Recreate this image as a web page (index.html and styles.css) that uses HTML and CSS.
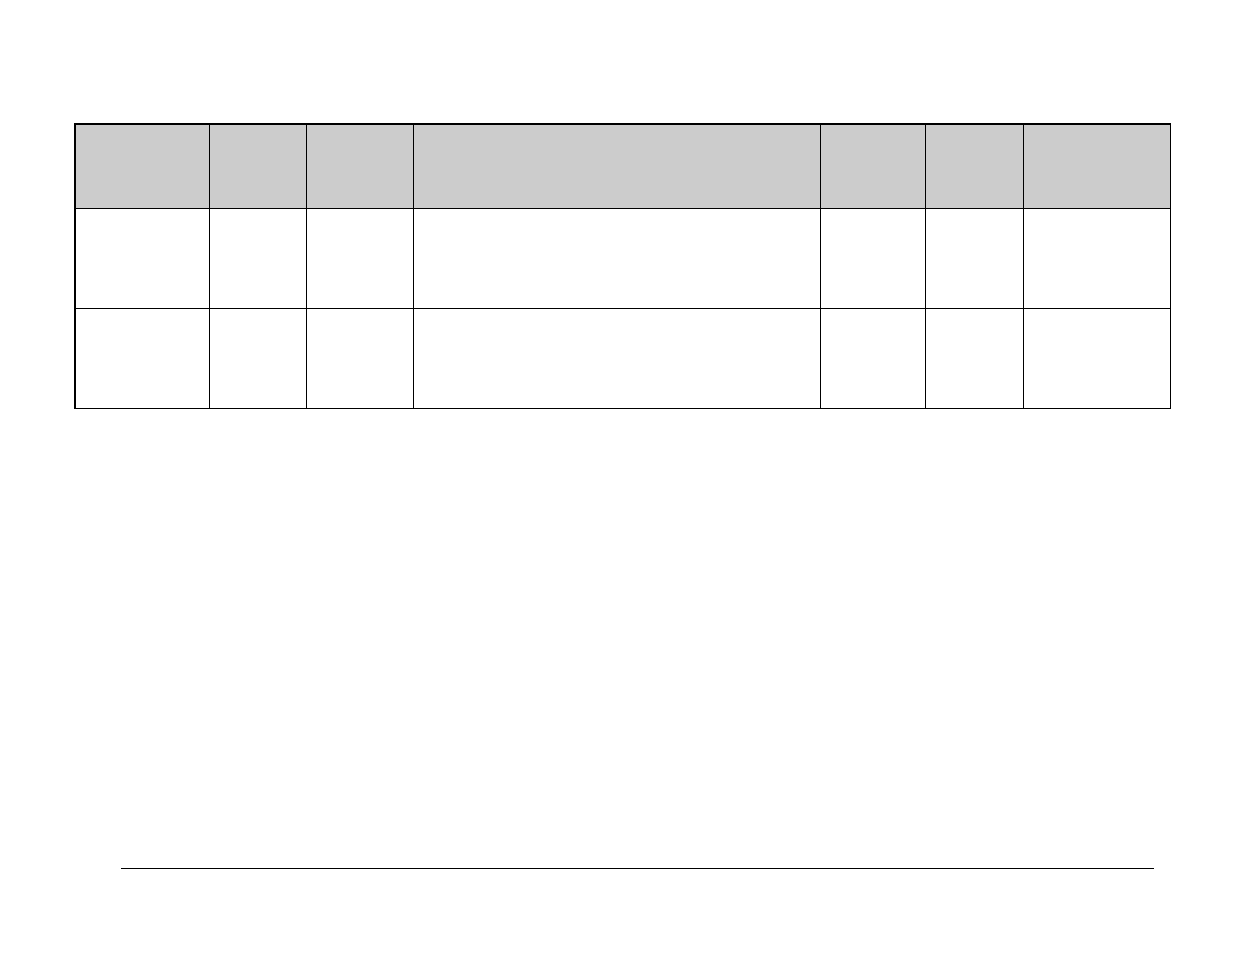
FILE: index.html
```html
<!DOCTYPE html>
<html lang="en">
<head>
<meta charset="utf-8">
<title>Table</title>
<link rel="stylesheet" href="styles.css">
</head>
<body>
<main class="page">
  <div class="grid-table" role="table">
    <div class="cell head" role="columnheader"></div>
    <div class="cell head" role="columnheader"></div>
    <div class="cell head" role="columnheader"></div>
    <div class="cell head" role="columnheader"></div>
    <div class="cell head" role="columnheader"></div>
    <div class="cell head" role="columnheader"></div>
    <div class="cell head" role="columnheader"></div>

    <div class="cell" role="cell"></div>
    <div class="cell" role="cell"></div>
    <div class="cell" role="cell"></div>
    <div class="cell" role="cell"></div>
    <div class="cell" role="cell"></div>
    <div class="cell" role="cell"></div>
    <div class="cell" role="cell"></div>

    <div class="cell" role="cell"></div>
    <div class="cell" role="cell"></div>
    <div class="cell" role="cell"></div>
    <div class="cell" role="cell"></div>
    <div class="cell" role="cell"></div>
    <div class="cell" role="cell"></div>
    <div class="cell" role="cell"></div>
  </div>
  <hr class="footer-rule">
</main>
</body>
</html>
```
FILE: styles.css
```css
html, body {
  margin: 0;
  padding: 0;
  background: #ffffff;
  font-family: "Liberation Sans", Arial, sans-serif;
}

.page {
  padding: 123px 0 0 74px;
}

.grid-table {
  display: grid;
  width: max-content;
  grid-template-columns: 134px 97px 107px 407px 105px 98px 147px;
  grid-template-rows: 84px 100px 100px;
  border-top: 2px solid #000;
  border-left: 2px solid #000;
}

.cell {
  box-sizing: border-box;
  border-right: 1px solid #000;
  border-bottom: 1px solid #000;
  background: #ffffff;
}

.cell.head {
  background: #cccccc;
}

.footer-rule {
  box-sizing: border-box;
  margin: 459px 0 0 47px;
  width: 1033px;
  height: 1px;
  border: 0;
  background: #000;
}
```
